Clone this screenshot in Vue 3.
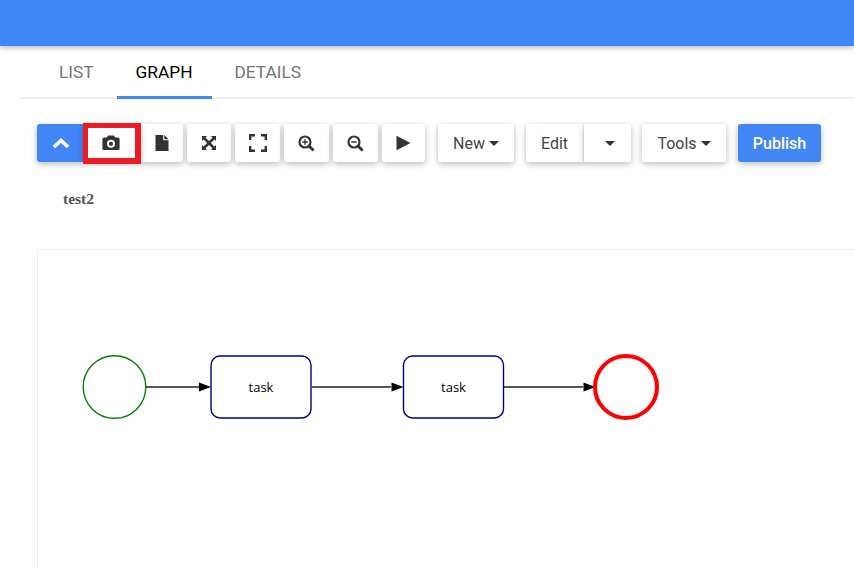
<script setup>
const tabs = [
  { label: 'List', active: false },
  { label: 'Graph', active: true },
  { label: 'Details', active: false }
]
const tasks = [
  { x: 211, tx: 261 },
  { x: 403.5, tx: 453.5 }
]
const lines = [
  { x1: 146, x2: 199, ax: 199 },
  { x1: 312, x2: 391, ax: 391.5 },
  { x1: 504, x2: 583, ax: 583.5 }
]
</script>

<template>
  <div class="page">
    <header class="topbar"></header>

    <nav class="tabs">
      <a v-for="t in tabs" :key="t.label" class="tab" :class="{ active: t.active }">{{ t.label }}</a>
    </nav>

    <div class="toolbar">
      <div class="group">
        <button class="btn icon primary first">
          <svg width="18" height="12" viewBox="0 0 18 12"><path d="M2 10 L9 3.5 L16 10" fill="none" stroke="#fff" stroke-width="3.6"/></svg>
        </button>
        <button class="btn icon camera">
          <svg width="18" height="16" viewBox="0 0 18 16"><path fill-rule="evenodd" fill="#333" d="M6 0.500h6l1.100 2H16a1.600 1.600 0 0 1 1.600 1.600v9.300A1.600 1.600 0 0 1 16 15H2a1.600 1.600 0 0 1-1.600-1.600V4.100A1.600 1.600 0 0 1 2 2.500h2.900zM9 4.800a4 4 0 1 0 0 8a4 4 0 0 0 0-8zM9 6.700a2.100 2.100 0 1 1 0 4.200a2.100 2.100 0 0 1 0-4.200z"/></svg>
        </button>
        <button class="btn icon file">
          <svg width="14" height="16" viewBox="0 0 14 16"><path fill="#333" d="M0.500 0h7.700v5.200h5.300V16H0.500zM9.300 0l4.200 4.200H9.300z"/></svg>
        </button>
      </div>
      <button class="btn icon expand">
        <svg width="16" height="16" viewBox="0 0 16 16"><path fill="#333" d="M1 1h5L4.500 2.700 8 6.100l3.500-3.400L10 1h5v5l-1.700-1.600L9.900 8l3.400 3.500L15 10v5h-5l1.500-1.700L8 9.900l-3.500 3.400L6 15H1v-5l1.700 1.500L6.100 8 2.700 4.400 1 6z"/></svg>
      </button>
      <button class="btn icon full">
        <svg width="18" height="18" viewBox="0 0 18 18"><path fill="none" stroke="#333" stroke-width="2.400" d="M1.200 6V1.200H6M12 1.200h4.800V6M16.800 12v4.800H12M6 16.800H1.200V12"/></svg>
      </button>
      <button class="btn icon zoom">
        <svg width="17" height="17" viewBox="0 0 17 17"><circle cx="7" cy="7" r="5.500" fill="none" stroke="#333" stroke-width="2.200"/><path d="M11 11l4.600 4.600" stroke="#333" stroke-width="2.800"/><path d="M4.300 7h5.400M7 4.300v5.400" stroke="#333" stroke-width="1.300"/></svg>
      </button>
      <button class="btn icon zoom">
        <svg width="17" height="17" viewBox="0 0 17 17"><circle cx="7" cy="7" r="5.500" fill="none" stroke="#333" stroke-width="2.200"/><path d="M11 11l4.600 4.600" stroke="#333" stroke-width="2.800"/><path d="M4.300 7h5.400" stroke="#333" stroke-width="1.500"/></svg>
      </button>
      <button class="btn icon play">
        <svg width="15" height="16" viewBox="0 0 15 16"><path fill="#333" d="M0.500 0.800v14.400L14.500 8z"/></svg>
      </button>

      <button class="btn text new">New<span class="caret"></span></button>
      <div class="group split">
        <button class="btn text edit">Edit</button>
        <button class="btn text edit-caret"><span class="caret"></span></button>
      </div>
      <button class="btn text tools">Tools<span class="caret"></span></button>
      <button class="btn text primary publish">Publish</button>
    </div>

    <div class="title">test2</div>

    <section class="canvas">
      <svg class="diagram" width="817" height="319" viewBox="38 250 817 319">
        <circle cx="114.500" cy="387" r="31.300" fill="#fff" stroke="#008000" stroke-width="1.400"/>
        <g v-for="l in lines" :key="l.x1">
          <line :x1="l.x1" :x2="l.x2" y1="387" y2="387" stroke="#222" stroke-width="1.500"/>
          <path :d="`M${l.ax} 382.500 L${l.ax + 12} 387 L${l.ax} 391.500 Z`" fill="#000"/>
        </g>
        <g v-for="t in tasks" :key="t.x">
          <rect :x="t.x" y="356" width="100" height="62" rx="9" ry="9" fill="#fff" stroke="#000080" stroke-width="1.400"/>
          <text :x="t.tx" y="392" text-anchor="middle" class="task-label">task</text>
        </g>
        <circle cx="626" cy="387" r="31" fill="#fff" stroke="#ff0000" stroke-width="4"/>
      </svg>
    </section>
  </div>
</template>

<style scoped>
.page {
  width: 854px;
  height: 568px;
  overflow: hidden;
  background: #fff;
  font-family: Roboto, "Liberation Sans", sans-serif;
}
.topbar {
  height: 46px;
  background: #4285f4;
  box-shadow: 0 2px 5px rgba(0, 0, 0, 0.26);
  position: relative;
}
.tabs {
  display: flex;
  height: 51px;
  margin-left: 19px;
  padding-left: 21px;
  border-bottom: 2px solid #eeeeee;
}
.tab {
  padding: 0 19px;
  margin-right: 4px;
  height: 53px;
  box-sizing: border-box;
  line-height: 52px;
  font-size: 17.3px;
  color: #757575;
  text-transform: uppercase;
}
.tab.active {
  color: #000;
  border-bottom: 3px solid #4285f4;
}
.toolbar {
  display: flex;
  align-items: flex-start;
  gap: 4px;
  margin-top: 25px;
  padding-left: 37px;
}
.group {
  display: flex;
}
.btn {
  height: 38px;
  border: 0;
  padding: 0;
  margin: 0;
  background: #fff;
  border-radius: 3px;
  display: flex;
  align-items: center;
  justify-content: center;
  box-shadow: 0 2px 6px rgba(0, 0, 0, 0.28);
  font-family: inherit;
  color: #444;
  font-size: 16px;
  box-sizing: border-box;
}
.btn.primary {
  background: #4285f4;
  color: #fff;
}
.first {
  width: 47px;
  border-radius: 3px 0 0 3px;
}
.camera {
  width: 57px;
  border-radius: 0;
  position: relative;
  padding-right: 3px;
  padding-bottom: 1px;
}
.camera::after {
  content: "";
  position: absolute;
  inset: -1px 0 -2px -1px;
  border: 5px solid #ed1c24;
  border-right-width: 6px;
  border-bottom-width: 6px;
}
.file {
  width: 42px;
  border-radius: 0 3px 3px 0;
}
.expand { width: 44px; }
.full { width: 45px; }
.zoom { width: 45px; }
.play { width: 43px; margin-right: 9px; }
.new { width: 76px; margin-right: 8px; }
.split { margin-right: 7px; }
.edit {
  width: 58px;
  border-radius: 3px 0 0 3px;
  border-right: 1px solid #eee;
}
.edit-caret {
  width: 47px;
  border-radius: 0 3px 3px 0;
}
.tools { width: 84px; margin-right: 8px; }
.publish { width: 83px; font-weight: 500; }
.caret {
  display: inline-block;
  margin-left: 4px;
  border-top: 5px solid #333;
  border-left: 5px solid transparent;
  border-right: 5px solid transparent;
}
.title {
  margin-top: 29px;
  margin-left: 63px;
  height: 16px;
  line-height: 16px;
  font-family: "Liberation Serif", serif;
  font-weight: 700;
  font-size: 15.5px;
  color: #555;
}
.canvas {
  margin-top: 42px;
  margin-left: 37px;
  border-left: 1px solid #eee;
  border-top: 1px solid #eee;
  height: 320px;
}
.diagram {
  display: block;
}
.task-label {
  font-family: "Open Sans", sans-serif;
  font-size: 13px;
  fill: #000;
}
</style>
